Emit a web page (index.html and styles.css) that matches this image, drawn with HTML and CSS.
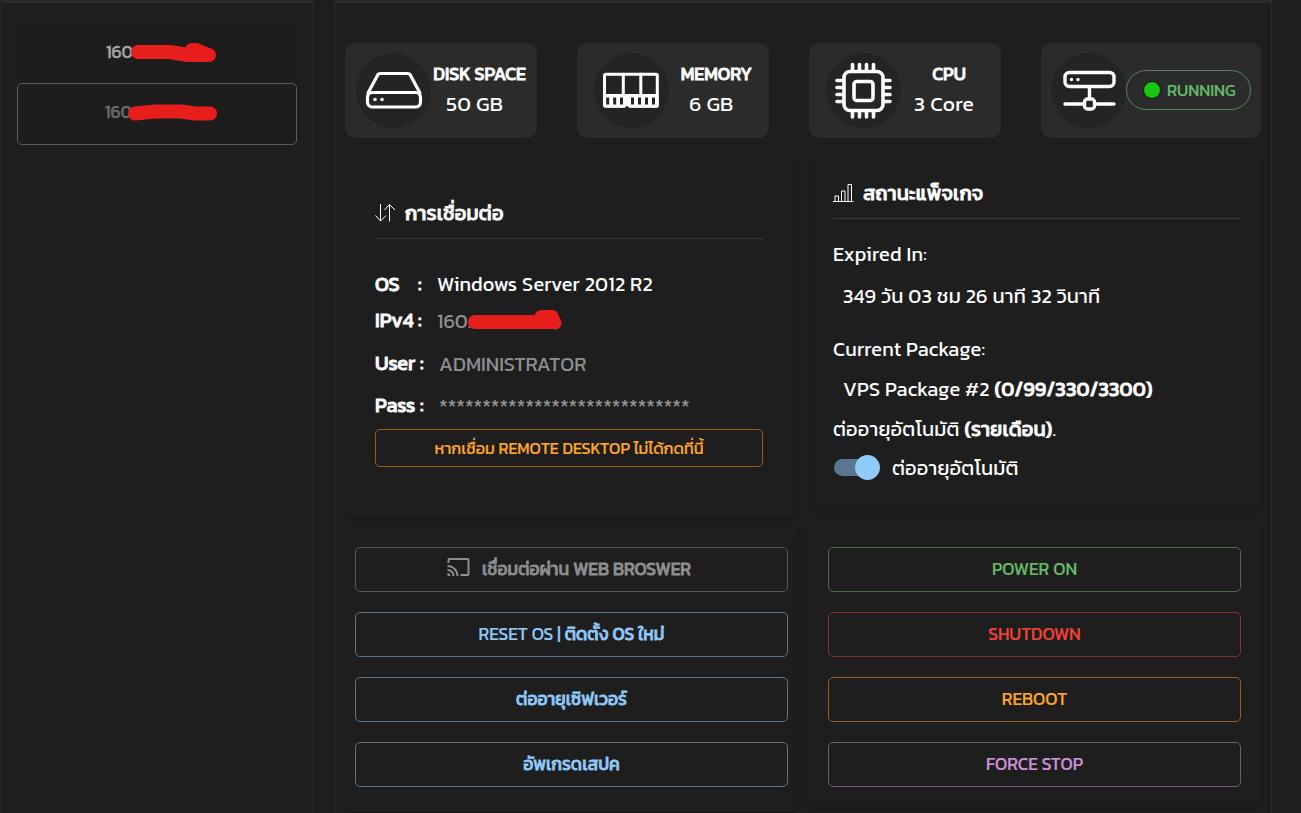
FILE: index.html
```html
<!DOCTYPE html>
<html lang="th">
<head>
  <meta charset="UTF-8">
  <meta name="viewport" content="width=device-width, initial-scale=1.0">
  <title>VPS Control Panel</title>
  <link rel="stylesheet" href="styles.css">
</head>
<body>
  <aside class="sidebar">
    <div class="server-item">
      <span class="masked">160
        <svg class="mask mask-a" width="88" height="22" viewBox="0 0 88 22"><path d="M8 9H40L58 12H79" stroke-width="14"/><path d="M62 7H66L78 12" stroke-width="14"/></svg>
      </span>
    </div>
    <div class="server-item active">
      <span class="masked">160
        <svg class="mask mask-b" width="92" height="20" viewBox="0 0 92 20"><path d="M8 10.500L28 8.500H54L68 10.500H83" stroke-width="14"/></svg>
      </span>
    </div>
  </aside>

  <main class="main">
    <div class="stats">
      <div class="stat stat-disk">
        <div class="stat-icon">
          <svg width="58" height="58" viewBox="0 0 58 58" stroke-width="3.2"><path d="M3 31L13 12.5Q14 11.500 16 11.500H42Q44 11.500 45 12.5L55 31"/><rect x="2.5" y="30.5" width="53" height="14.500" rx="5"/><circle class="dot" cx="10" cy="37.5" r="1.8"/><circle class="dot" cx="17" cy="37.5" r="1.8"/></svg>
        </div>
        <div class="stat-info"><b>DISK SPACE</b><span>50 GB</span></div>
      </div>
      <div class="stat">
        <div class="stat-icon">
          <svg width="58" height="58" viewBox="0 0 58 58" stroke-width="3"><path d="M4 12.300H54Q55.300 12.300 55.300 13.500V43Q55.300 44.300 54 44.300H28L25 41.500L22 44.300H4Q2.500 44.300 2.500 43V13.500Q2.500 12.300 4 12.300ZM21.300 12V33M38.800 12V33"/><path class="teeth" d="M3 33.500H55V44H28L25 41.500L22 44H3Z"/><path class="slots" d="M5.700 35.500V42.500M12.700 35.500V42.500M19.500 35.500V42.500M30.500 35.500V42.500M37.500 35.500V42.500M44.500 35.500V42.500M51.500 35.500V42.500"/></svg>
        </div>
        <div class="stat-info"><b>MEMORY</b><span>6 GB</span></div>
      </div>
      <div class="stat">
        <div class="stat-icon">
          <svg width="58" height="58" viewBox="0 0 58 58" stroke-width="3.6"><rect x="10" y="9.5" width="39" height="39" rx="6"/><rect x="20" y="19.5" width="19" height="19" rx="3"/><path d="M18.500 9V2.500M25.500 9V2.500M32.500 9V2.500M39.500 9V2.500M18.500 49V55M25.500 49V55M32.500 49V55M39.500 49V55M9 18.500H3M9 25.500H3M9 32.500H3M9 39.500H3M50 18.500H56M50 25.500H56M50 32.500H56M50 39.500H56"/></svg>
        </div>
        <div class="stat-info"><b>CPU</b><span>3 Core</span></div>
      </div>
      <div class="stat stat-status">
        <div class="stat-icon">
          <svg width="58" height="58" viewBox="0 0 58 58" stroke-width="3.4"><rect x="5" y="10.5" width="49" height="14" rx="4.5"/><path d="M29.500 25V36M5 42H24M35 42H54"/><rect x="24.5" y="37" width="10" height="10" rx="3"/><circle class="dot" cx="11.5" cy="17.5" r="1.7"/><circle class="dot" cx="18" cy="17.5" r="1.7"/></svg>
        </div>
        <div class="status-chip"><i class="status-dot"></i><span>RUNNING</span></div>
      </div>
    </div>

    <div class="details">
      <section class="card connection">
        <h2 class="card-title">
          <svg width="21" height="20" viewBox="0 0 21 20"><path d="M5.500 1V18M.5 12.500L5.500 18L11 12.500M14.500 18.500V1.500M9.500 7L14.500 1.500L20 7"/></svg>
          <span>การเชื่อมต่อ</span>
        </h2>
        <div class="conn-row first"><b>OS</b><b>:</b><span>Windows Server 2012 R2</span></div>
        <div class="conn-row"><b>IPv4</b><b>:</b>
          <span class="masked muted">160.
            <svg class="mask mask-c" width="98" height="24" viewBox="0 0 98 24"><path d="M9 14H86" stroke-width="14"/><path d="M75 8.500H86L89 15" stroke-width="13"/></svg>
          </span>
        </div>
        <div class="conn-row tall gap"><b>User</b><b>:</b><span class="muted">ADMINISTRATOR</span></div>
        <div class="conn-row tall"><b>Pass</b><b>:</b><span class="muted">*****************************</span></div>
        <button class="btn btn-orange btn-help">หากเชื่อม REMOTE DESKTOP ไม่ได้กดที่นี้</button>
      </section>

      <section class="card package">
        <h2 class="card-title">
          <svg width="21" height="20" viewBox="0 0 21 20"><path d="M0 18.500H20.500M2 18V13H5.500V18M8.500 18V8H12V18M15 18V1.500H18.500V18"/></svg>
          <span>สถานะแพ็จเกจ</span>
        </h2>
        <p class="expired">Expired In:</p>
        <p class="indent time">349 วัน 03 ชม 26 นาที 32 วินาที</p>
        <p>Current Package:</p>
        <p class="indent">VPS Package #2 <b>(0/99/330/3300)</b></p>
        <p>ต่ออายุอัตโนมัติ <b>(รายเดือน)</b>.</p>
        <label class="switch-row"><span class="switch"></span>ต่ออายุอัตโนมัติ</label>
      </section>
    </div>

    <div class="actions">
      <section class="card action-list">
        <button class="btn btn-grey">
          <svg width="25" height="24" viewBox="0 0 24 24"><path d="M21 3H3c-1.100 0-2 .9-2 2v3h2V5h18v14h-7v2h7c1.100 0 2-.9 2-2V5c0-1.100-.9-2-2-2zM1 18v3h3c0-1.660-1.340-3-3-3zm0-4v2c2.760 0 5 2.240 5 5h2c0-3.870-3.130-7-7-7zm0-4v2c4.970 0 9 4.030 9 9h2c0-6.080-4.930-11-11-11z"/></svg>
          <b>เชื่อมต่อผ่าน WEB BROSWER</b>
        </button>
        <button class="btn btn-blue"><span>RESET OS | <b>ติดตั้ง OS ใหม่</b></span></button>
        <button class="btn btn-blue"><b>ต่ออายุเซิฟเวอร์</b></button>
        <button class="btn btn-blue"><b>อัพเกรดเสปค</b></button>
      </section>
      <section class="card action-list power">
        <button class="btn btn-green">POWER ON</button>
        <button class="btn btn-red">SHUTDOWN</button>
        <button class="btn btn-orange">REBOOT</button>
        <button class="btn btn-purple">FORCE STOP</button>
      </section>
    </div>
  </main>
</body>
</html>
```
FILE: styles.css
```css
* {
  box-sizing: border-box;
}

body {
  margin: 0;
  padding: 0 29px 0 1px;
  height: 813px;
  overflow: hidden;
  display: flex;
  gap: 20px;
  background-color: #1e1e1e;
  color: #fff;
  font-family: Kanit, Roboto, "Noto Sans Thai", sans-serif;
  font-size: 20px;
  letter-spacing: 0.19px;
  white-space: nowrap;
}

h2, p {
  margin: 0;
}

b, h2 span {
  font-weight: 400;
  -webkit-text-stroke: 0.9px currentColor;
}

svg {
  flex: none;
  fill: none;
  stroke: currentColor;
}

.sidebar {
  width: 313px;
  height: 813px;
  padding: 20px 16px 0 15px;
  border: 1px solid #2d2d2d;
  border-top: 3px solid #2b2b2b;
  border-bottom: 0;
}

.server-item {
  height: 60px;
  padding: 0 0 2px 89px;
  display: flex;
  align-items: center;
  background-color: #1d1d1d;
  border-radius: 5px;
  color: #a5a5a5;
  font-size: 17.5px;
  letter-spacing: 0;
  -webkit-text-stroke: 0.4px currentColor;
}

.server-item.active {
  height: 62px;
  padding: 0 0 4px 87px;
  border: 1px solid #5a5a5a;
  color: #6b6b6b;
}

/* IP addresses are painted over */
.masked {
  position: relative;
}

.mask {
  position: absolute;
  stroke: #e81e1c;
  stroke-linecap: round;
  stroke-linejoin: round;
}

.mask-a {
  left: 24px;
  top: 4px;
}

.mask-b {
  left: 22px;
  top: 4px;
}

.mask-c {
  left: 29px;
  top: 2px;
}

.main {
  width: 938px;
  height: 813px;
  padding: 40px 10px 0;
  border: 1px solid #2d2d2d;
  border-top: 3px solid #2b2b2b;
  border-bottom: 0;
}

.stats {
  display: flex;
  gap: 40px;
}

.stat {
  width: 192px;
  height: 95px;
  padding: 0 17px;
  display: flex;
  align-items: center;
  justify-content: space-between;
  background-color: #2b2b2b;
  border-radius: 10px;
}

.stat-disk {
  padding: 0 11px;
}

.stat-status {
  width: 220px;
  padding: 0 10px;
}

.stat-icon {
  width: 75px;
  height: 75px;
  flex: none;
  display: flex;
  align-items: center;
  justify-content: center;
  padding-right: 1px;
  border-radius: 50%;
  background-color: #242424;
}

.stat-disk .stat-icon,
.stat-status .stat-icon {
  padding: 0 0 0 1px;
}

.stat-icon svg {
  stroke-linecap: round;
  stroke-linejoin: round;
}

.stat-icon .dot {
  fill: #fff;
  stroke: none;
}

.stat-icon .teeth {
  fill: #fff;
}

.stat-icon .slots {
  stroke: #242424;
  stroke-linecap: butt;
}

.stat-info {
  display: flex;
  flex-direction: column;
  align-items: center;
  line-height: 30px;
  padding-bottom: 3px;
}

.stat-info b {
  font-size: 18px;
  letter-spacing: 0;
}

.stat-info span {
  margin-right: 10px;
  font-size: 21px;
}

.status-chip {
  width: 125px;
  height: 40px;
  flex: none;
  display: flex;
  align-items: center;
  margin-bottom: 1px;
  padding-left: 16px;
  gap: 6px;
  border: 1px solid #4a8a4d;
  border-radius: 20px;
  color: #66bb6a;
  font-size: 16.5px;
  letter-spacing: 0;
  -webkit-text-stroke: 0.2px currentColor;
}

.status-dot {
  width: 18px;
  height: 18px;
  border: 1px solid #101510;
  border-radius: 50%;
  background-color: #17c60d;
}

.details {
  display: flex;
  align-items: flex-start;
  gap: 18px;
  margin-top: 20px;
}

.card {
  border-radius: 5px;
  box-shadow: 0 1px 3px rgba(0, 0, 0, 0.25);
}

.connection {
  width: 450px;
  height: 359px;
  padding: 30px 32px 0 30px;
}

.package {
  width: 448px;
  height: 353px;
  padding: 10px 20px 0;
}

.card-title {
  height: 51px;
  display: flex;
  align-items: center;
  gap: 9px;
  border-bottom: 1px solid #3a3a3a;
  font-size: 20px;
}

.conn-row {
  height: 36px;
  display: grid;
  grid-template-columns: 43px 19px auto;
  align-items: center;
  justify-content: start;
}

.conn-row b {
  margin-bottom: 3px;
  letter-spacing: 0;
}

.conn-row.first {
  margin-top: 28px;
  padding-bottom: 2px;
}

.conn-row.first b {
  margin-bottom: 0;
}

.conn-row.tall {
  height: 42px;
  grid-template-columns: 45px 19px auto;
}

.conn-row.gap {
  margin-top: 4px;
}

.muted {
  color: #8f8f8f;
  letter-spacing: 0;
}

.btn {
  width: 100%;
  height: 45px;
  padding: 0 0 2px;
  display: flex;
  align-items: center;
  justify-content: center;
  background: none;
  border: 1px solid;
  border-radius: 5px;
  font-family: inherit;
  font-size: 17.5px;
  -webkit-text-stroke: 0.2px currentColor;
  white-space: nowrap;
  cursor: pointer;
}

.btn b {
  letter-spacing: 0;
  -webkit-text-stroke: 0.8px currentColor;
}

.btn-help {
  height: 38px;
  margin-top: 2px;
  padding: 0;
  font-size: 16.2px;
}

.package p {
  height: 40px;
  line-height: 38px;
}

.package .expired {
  margin-top: 16px;
}

.package .time {
  margin: 2px 0 13px;
}

.package .indent {
  padding-left: 10px;
}

.switch-row {
  height: 36px;
  display: flex;
  align-items: center;
  gap: 20px;
}

.switch {
  width: 38px;
  height: 17px;
  margin: 0 0 1px 1px;
  display: flex;
  align-items: center;
  justify-content: flex-end;
  border-radius: 9px;
  background-color: #5a7690;
}

.switch::after {
  content: "";
  width: 25px;
  height: 25px;
  flex: none;
  margin-right: -8px;
  border-radius: 50%;
  background-color: #90caf9;
}

.actions {
  display: flex;
  align-items: flex-start;
  gap: 10px;
  margin-top: 10px;
}

.action-list {
  width: 453px;
  height: 284px;
  padding: 20px 10px;
  display: flex;
  flex-direction: column;
  gap: 20px;
}

.action-list.power {
  height: 280px;
  padding: 20px;
}

.btn-grey {
  gap: 11px;
  padding-right: 6px;
  color: #8f8f8f;
  border-color: #565656;
}

.btn-grey svg {
  fill: #8f8f8f;
  stroke: none;
  margin-top: -4px;
}

.btn-blue {
  color: #90caf9;
  border-color: #57748b;
}

.btn-green {
  color: #66bb6a;
  border-color: #427044;
}

.btn-red {
  color: #f44336;
  border-color: #8a302a;
}

.btn-orange {
  color: #ffa726;
  border-color: #906322;
}

.btn-purple {
  color: #ce93d8;
  border-color: #76587c;
}
```
